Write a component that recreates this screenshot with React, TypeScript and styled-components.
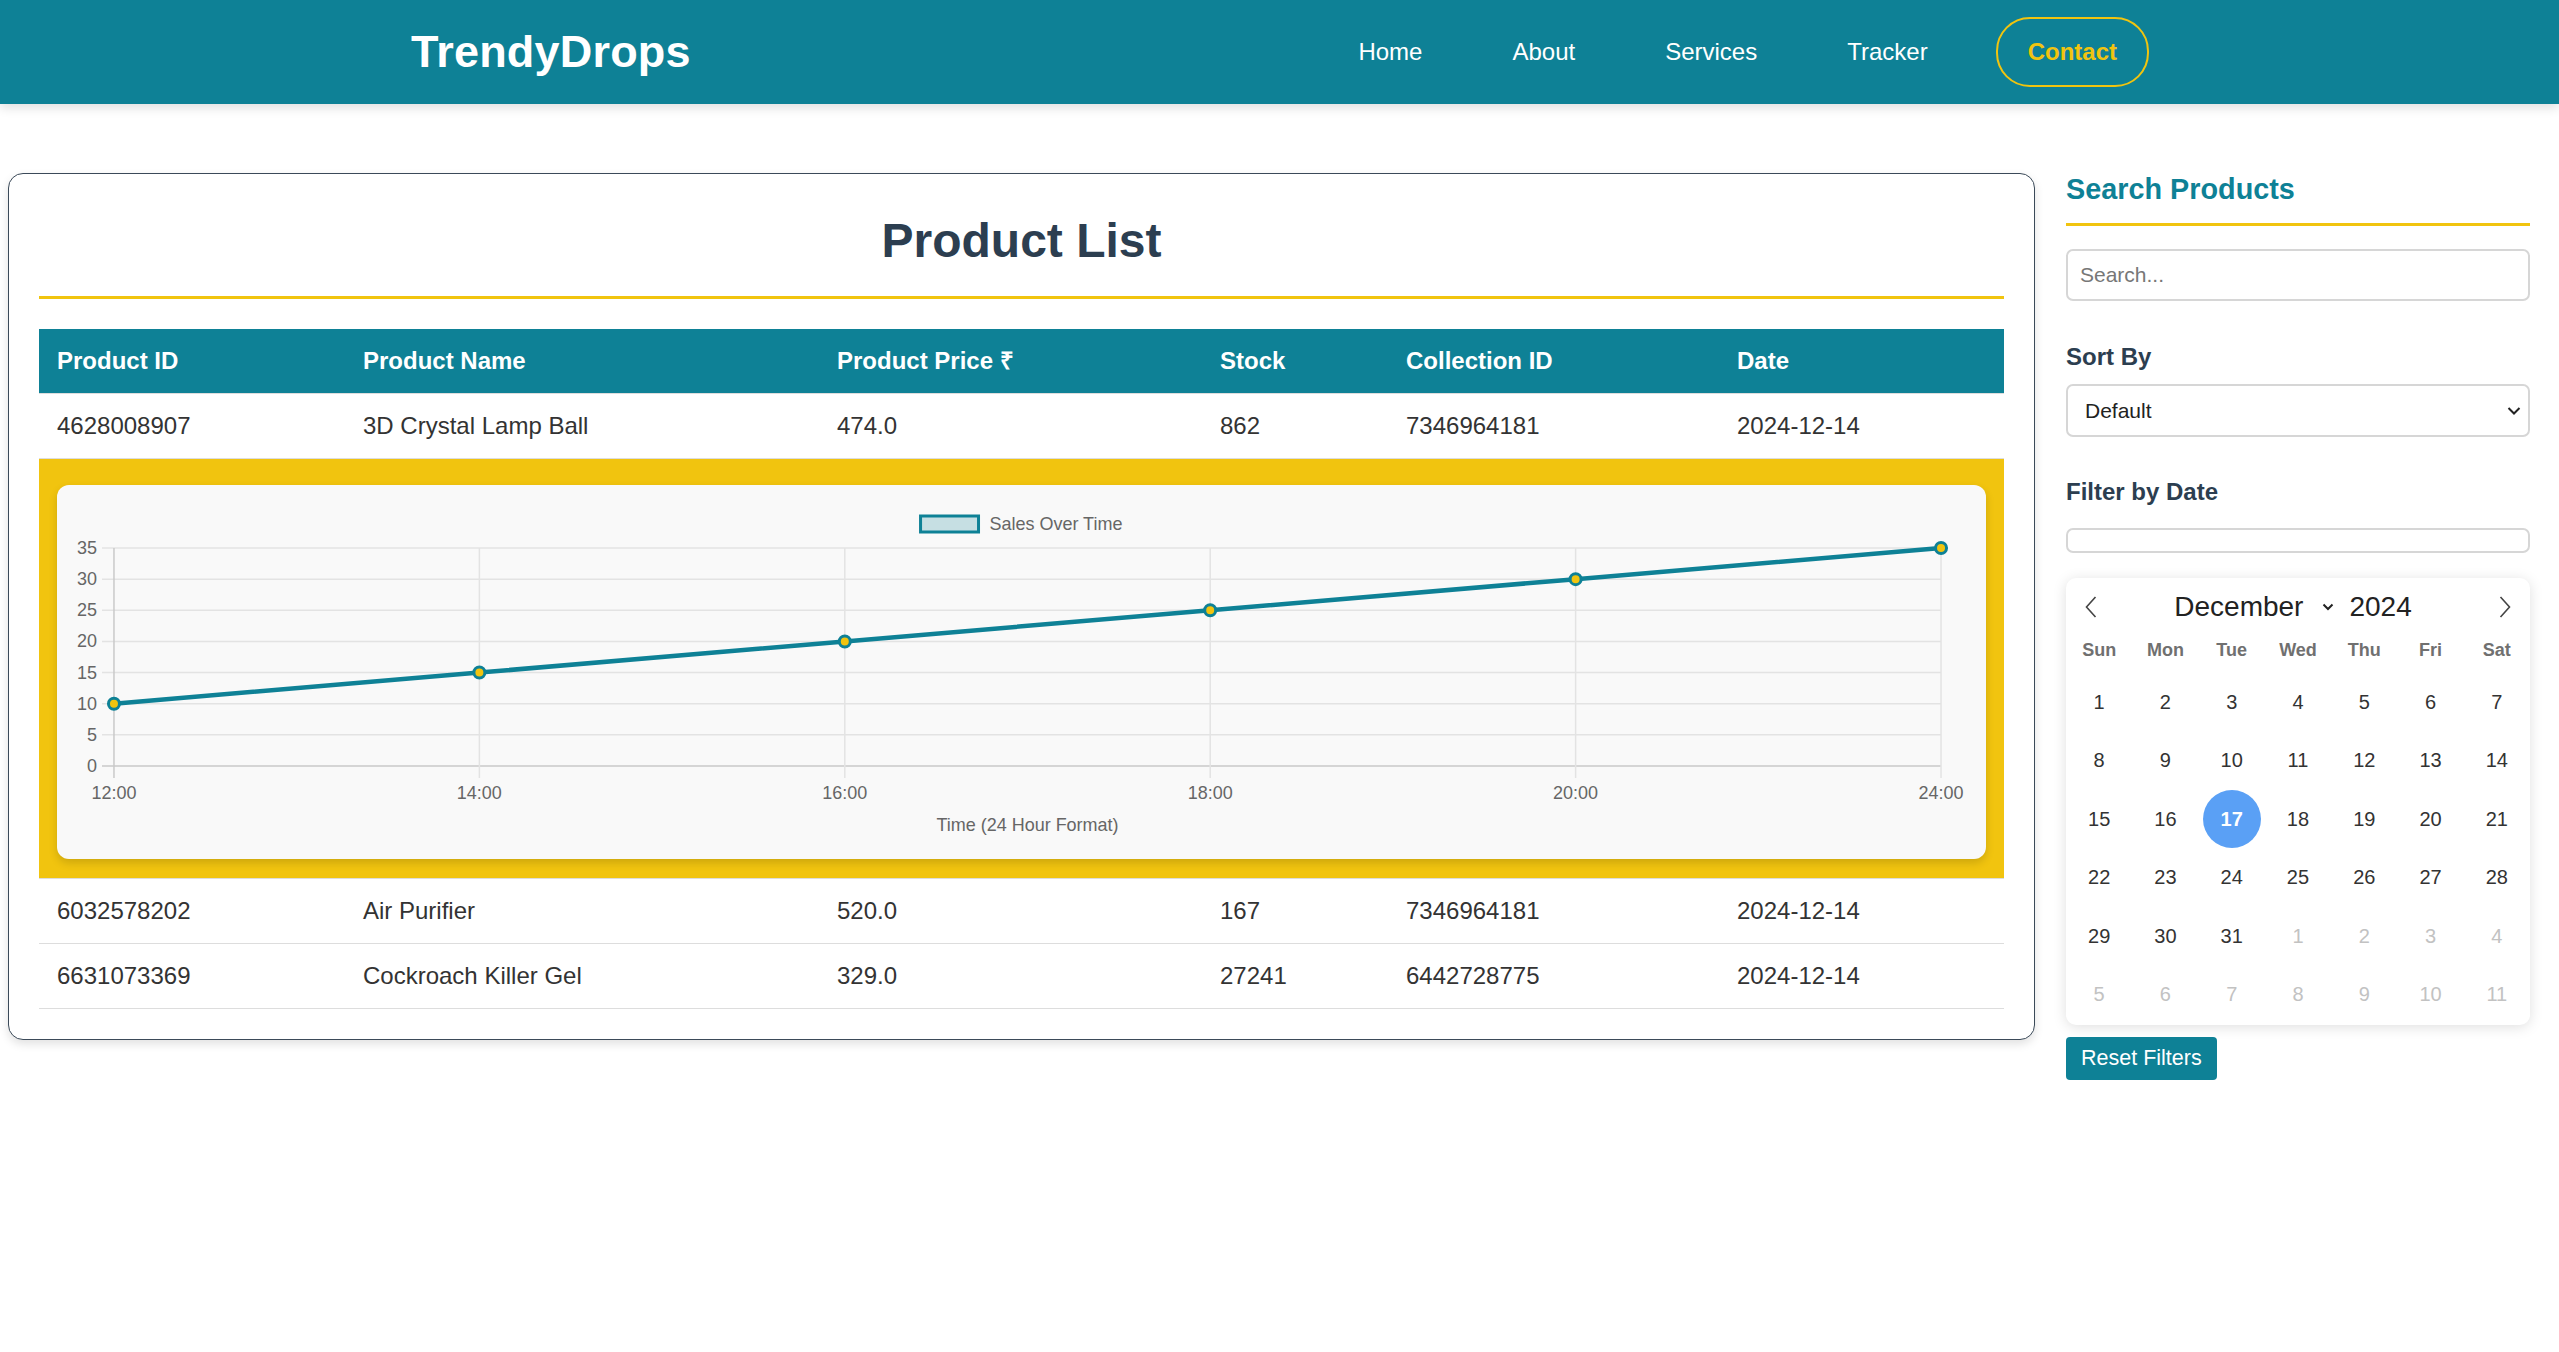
import React from "react";
import styled, { createGlobalStyle } from "styled-components";

const TEAL = "#0e8196";
const YELLOW = "#f1c40f";
const NAVY = "#2c3e50";

const GlobalStyle = createGlobalStyle`
  html, body { margin: 0; padding: 0; background: #fff; }
  body { font-family: "Liberation Sans", Arial, sans-serif; color: #333; }
  * { box-sizing: border-box; }
`;

/* ---------- Navbar ---------- */
const NavBar = styled.header`
  height: 104px;
  background: ${TEAL};
  box-shadow: 0 4px 10px rgba(0, 0, 0, 0.12);
  display: flex;
  align-items: center;
  justify-content: space-between;
  padding: 0 410px 0 411px;
  position: relative;
  z-index: 1;
`;

const Brand = styled.div`
  color: #fff;
  font-size: 45px;
  font-weight: 700;
  letter-spacing: 0.2px;
`;

const NavList = styled.nav`
  display: flex;
  align-items: center;
  gap: 46px;
`;

const NavLink = styled.a`
  color: #fff;
  font-size: 24px;
  padding: 10px 22px;
  text-decoration: none;
`;

const ContactButton = styled.a`
  color: ${YELLOW};
  font-size: 24px;
  font-weight: 700;
  border: 2px solid ${YELLOW};
  border-radius: 34px;
  padding: 19px 30px;
  text-decoration: none;
`;

/* ---------- Page layout ---------- */
const Page = styled.main`
  display: flex;
  align-items: flex-start;
  gap: 31px;
  padding: 69px 29px 40px 8px;
`;

const MainCard = styled.section`
  flex: 1;
  min-width: 0;
  background: #fff;
  border: 1px solid #3b4a59;
  border-radius: 15px;
  padding: 30px;
  box-shadow: 0 4px 10px rgba(0, 0, 0, 0.12);
`;

const Title = styled.h1`
  margin: 9px 0 30px;
  padding-bottom: 28px;
  border-bottom: 3px solid ${YELLOW};
  text-align: center;
  font-size: 48px;
  line-height: 55px;
  font-weight: 700;
  color: ${NAVY};
`;

const Table = styled.table`
  width: 100%;
  border-collapse: collapse;
  table-layout: fixed;
`;

const Th = styled.th<{ $w: number }>`
  width: ${(p) => p.$w}px;
  text-align: left;
  padding: 18px;
  font-size: 24px;
  line-height: 28px;
  font-weight: 700;
  color: #fff;
  background: ${TEAL};
  border-bottom: 1px solid #ddd;
`;

const Td = styled.td`
  padding: 18px;
  font-size: 24px;
  line-height: 28px;
  color: #333;
  border-bottom: 1px solid #ddd;
  white-space: nowrap;
`;

const ChartCell = styled.td`
  background: ${YELLOW};
  padding: 26px 18px 19px;
  border-bottom: 1px solid #ddd;
`;

const ChartCard = styled.div`
  background: #f9f9f9;
  border-radius: 12px;
  box-shadow: 0 4px 8px rgba(0, 0, 0, 0.15);
  height: 374px;
  overflow: hidden;
`;

const ChartSvg = styled.svg`
  display: block;
  width: 100%;
  height: 374px;
`;

const ChartText = styled.text`
  font-family: "Liberation Sans", Arial, sans-serif;
  font-size: 18px;
  fill: #666;
`;

/* ---------- Sidebar ---------- */
const Sidebar = styled.aside`
  width: 464px;
  flex-shrink: 0;
  display: flex;
  flex-direction: column;
  align-items: stretch;
`;

const SideTitle = styled.h2`
  margin: 0;
  padding-bottom: 17px;
  border-bottom: 3px solid ${YELLOW};
  font-size: 28.8px;
  line-height: 33px;
  font-weight: 700;
  color: ${TEAL};
`;

const SearchInput = styled.input`
  margin-top: 23px;
  height: 52px;
  border: 2px solid #d6d6d6;
  border-radius: 7px;
  padding: 0 12px;
  font-family: "Liberation Sans", Arial, sans-serif;
  font-size: 21px;
  color: #333;
  &::placeholder { color: #777; }
`;

const Label = styled.label<{ $gap: number }>`
  margin-top: ${(p) => p.$gap}px;
  font-size: 24px;
  line-height: 28px;
  font-weight: 700;
  color: ${NAVY};
`;

const SelectWrap = styled.div`
  position: relative;
  margin-top: 13px;
  height: 53px;
`;

const SortSelect = styled.select`
  appearance: none;
  -webkit-appearance: none;
  width: 100%;
  height: 100%;
  border: 2px solid #d6d6d6;
  border-radius: 7px;
  padding: 0 40px 0 17px;
  font-family: "Liberation Sans", Arial, sans-serif;
  font-size: 21px;
  color: #222;
  background: #fff;
`;

const SelectChevron = styled.svg`
  position: absolute;
  right: 9px;
  top: 50%;
  transform: translateY(-50%);
  pointer-events: none;
`;

const DateInput = styled.input`
  margin-top: 22px;
  height: 25px;
  border: 2px solid #d6d6d6;
  border-radius: 7px;
  background: #fff;
`;

const Calendar = styled.div`
  margin-top: 25px;
  background: #fff;
  border-radius: 10px;
  box-shadow: 0 2px 14px rgba(0, 0, 0, 0.13);
  padding: 8px 0 1px;
`;

const CalHeader = styled.div`
  height: 41px;
  display: flex;
  align-items: center;
  justify-content: space-between;
  padding: 0 19px;
`;

const CalTitle = styled.div`
  display: flex;
  align-items: center;
  font-size: 28px;
  color: #222;
  padding-right: 10px;
`;

const TitleChevron = styled.svg`
  display: block;
  margin: 0 15px 0 19px;
`;

const NavArrow = styled.svg`
  display: block;
`;

const WeekRow = styled.div`
  display: grid;
  grid-template-columns: repeat(7, 1fr);
  height: 46px;
  align-items: center;
`;

const WeekDay = styled.div`
  text-align: center;
  font-size: 18px;
  font-weight: 700;
  color: #707070;
`;

const DayGrid = styled.div`
  display: grid;
  grid-template-columns: repeat(7, 1fr);
  grid-auto-rows: 58.5px;
`;

const DayCell = styled.div<{ $muted?: boolean }>`
  display: flex;
  align-items: center;
  justify-content: center;
  font-size: 20px;
  color: ${(p) => (p.$muted ? "#c2c2c2" : "#333")};
`;

const Selected = styled.span`
  width: 58px;
  height: 58px;
  border-radius: 50%;
  background: #5aa0f5;
  color: #fff;
  font-weight: 700;
  display: flex;
  align-items: center;
  justify-content: center;
`;

const ResetButton = styled.button`
  margin-top: 12px;
  align-self: flex-start;
  height: 43px;
  padding: 0 15px;
  border: none;
  border-radius: 4px;
  background: ${TEAL};
  color: #fff;
  font-family: "Liberation Sans", Arial, sans-serif;
  font-size: 21.5px;
`;

/* ---------- Data ---------- */
const columns = [
  { label: "Product ID", w: 306 },
  { label: "Product Name", w: 474 },
  { label: "Product Price ₹", w: 383 },
  { label: "Stock", w: 186 },
  { label: "Collection ID", w: 331 },
  { label: "Date", w: 285 },
];

const rows = [
  ["4628008907", "3D Crystal Lamp Ball", "474.0", "862", "7346964181", "2024-12-14"],
  ["6032578202", "Air Purifier", "520.0", "167", "7346964181", "2024-12-14"],
  ["6631073369", "Cockroach Killer Gel", "329.0", "27241", "6442728775", "2024-12-14"],
];

/* ---------- Chart ---------- */
const X0 = 57;
const X1 = 1885;
const YT = 63;
const YB = 281;
const xLabels = ["12:00", "14:00", "16:00", "18:00", "20:00", "24:00"];
const values = [10, 15, 20, 25, 30, 35];
const xs = xLabels.map((_, i) => X0 + (i * (X1 - X0)) / 5);
const yOf = (v: number) => YB - (v / 35) * (YB - YT);
const yTicks = [0, 5, 10, 15, 20, 25, 30, 35];

function SalesChart() {
  const path = values.map((v, i) => `${i === 0 ? "M" : "L"}${xs[i]},${yOf(v)}`).join(" ");
  return (
    <ChartSvg viewBox="0 0 1930 374" preserveAspectRatio="none">
      <rect x={864} y={31} width={58} height={16} fill="#c6dfe3" stroke={TEAL} strokeWidth={3} />
      <ChartText x={933} y={39} dominantBaseline="central">Sales Over Time</ChartText>

      {yTicks.map((v) => (
        <line
          key={v}
          x1={45}
          x2={X1}
          y1={yOf(v)}
          y2={yOf(v)}
          stroke={v === 0 ? "#c9c9c9" : "#e3e3e3"}
          strokeWidth={1.5}
        />
      ))}
      {xs.map((x, i) => (
        <line
          key={i}
          x1={x}
          x2={x}
          y1={YT}
          y2={293}
          stroke={i === 0 ? "#c9c9c9" : "#e3e3e3"}
          strokeWidth={1.5}
        />
      ))}
      {yTicks.map((v) => (
        <ChartText key={v} x={40} y={yOf(v)} textAnchor="end" dominantBaseline="central">
          {v}
        </ChartText>
      ))}
      {xLabels.map((l, i) => (
        <ChartText key={l} x={xs[i]} y={308} textAnchor="middle" dominantBaseline="central">
          {l}
        </ChartText>
      ))}
      <ChartText x={(X0 + X1) / 2} y={340} textAnchor="middle" dominantBaseline="central">
        Time (24 Hour Format)
      </ChartText>

      <path d={path} fill="none" stroke={TEAL} strokeWidth={4.5} strokeLinejoin="round" />
      {values.map((v, i) => (
        <circle key={i} cx={xs[i]} cy={yOf(v)} r={5.5} fill={YELLOW} stroke={TEAL} strokeWidth={3} />
      ))}
    </ChartSvg>
  );
}

/* ---------- Calendar ---------- */
const weekDays = ["Sun", "Mon", "Tue", "Wed", "Thu", "Fri", "Sat"];
const days: { n: number; muted?: boolean }[] = [
  ...Array.from({ length: 31 }, (_, i) => ({ n: i + 1 })),
  ...Array.from({ length: 11 }, (_, i) => ({ n: i + 1, muted: true })),
];

function DatePicker() {
  return (
    <Calendar>
      <CalHeader>
        <NavArrow width="12" height="22" viewBox="0 0 12 22">
          <polyline points="10.5,1 1.5,11 10.5,21" fill="none" stroke="#444" strokeWidth="1.6" />
        </NavArrow>
        <CalTitle>
          <span>December</span>
          <TitleChevron width="12" height="8" viewBox="0 0 12 8">
            <polyline points="1.5,1.5 6,6 10.5,1.5" fill="none" stroke="#222" strokeWidth="2" />
          </TitleChevron>
          <span>2024</span>
        </CalTitle>
        <NavArrow width="12" height="22" viewBox="0 0 12 22">
          <polyline points="1.5,1 10.5,11 1.5,21" fill="none" stroke="#444" strokeWidth="1.6" />
        </NavArrow>
      </CalHeader>
      <WeekRow>
        {weekDays.map((d) => (
          <WeekDay key={d}>{d}</WeekDay>
        ))}
      </WeekRow>
      <DayGrid>
        {days.map((d, i) => (
          <DayCell key={i} $muted={d.muted}>
            {!d.muted && d.n === 17 ? <Selected>17</Selected> : d.n}
          </DayCell>
        ))}
      </DayGrid>
    </Calendar>
  );
}

export default function App() {
  return (
    <>
      <GlobalStyle />
      <NavBar>
        <Brand>TrendyDrops</Brand>
        <NavList>
          <NavLink href="#">Home</NavLink>
          <NavLink href="#">About</NavLink>
          <NavLink href="#">Services</NavLink>
          <NavLink href="#">Tracker</NavLink>
          <ContactButton href="#">Contact</ContactButton>
        </NavList>
      </NavBar>
      <Page>
        <MainCard>
          <Title>Product List</Title>
          <Table>
            <thead>
              <tr>
                {columns.map((c) => (
                  <Th key={c.label} $w={c.w}>
                    {c.label}
                  </Th>
                ))}
              </tr>
            </thead>
            <tbody>
              <tr>
                {rows[0].map((v, i) => (
                  <Td key={i}>{v}</Td>
                ))}
              </tr>
              <tr>
                <ChartCell colSpan={6}>
                  <ChartCard>
                    <SalesChart />
                  </ChartCard>
                </ChartCell>
              </tr>
              {rows.slice(1).map((r) => (
                <tr key={r[0]}>
                  {r.map((v, i) => (
                    <Td key={i}>{v}</Td>
                  ))}
                </tr>
              ))}
            </tbody>
          </Table>
        </MainCard>
        <Sidebar>
          <SideTitle>Search Products</SideTitle>
          <SearchInput placeholder="Search..." />
          <Label $gap={42}>Sort By</Label>
          <SelectWrap>
            <SortSelect defaultValue="default">
              <option value="default">Default</option>
              <option value="price">Price</option>
              <option value="stock">Stock</option>
            </SortSelect>
            <SelectChevron width="14" height="9" viewBox="0 0 14 9">
              <polyline points="1.5,1.5 7,7 12.5,1.5" fill="none" stroke="#222" strokeWidth="2" />
            </SelectChevron>
          </SelectWrap>
          <Label $gap={41}>Filter by Date</Label>
          <DateInput type="text" />
          <DatePicker />
          <ResetButton>Reset Filters</ResetButton>
        </Sidebar>
      </Page>
    </>
  );
}
